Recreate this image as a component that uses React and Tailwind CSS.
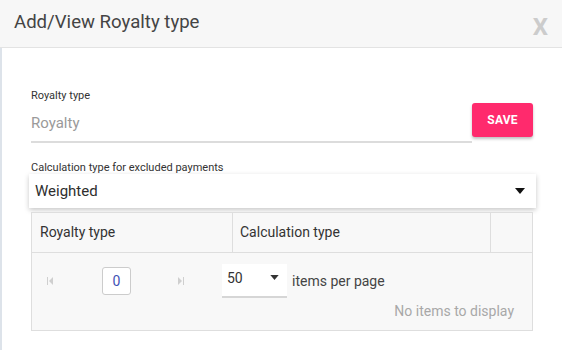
import React from 'react';

const CaretDown = ({ className }) => (
  <svg viewBox="0 0 10 6" className={className}>
    <path d="M0 0h10L5 6z" fill="currentColor" />
  </svg>
);

const FirstIcon = () => (
  <svg viewBox="0 0 6 8" className="w-[6px] h-[8px] text-[#cfcfcf]">
    <rect x="0" y="0" width="1" height="8" fill="currentColor" />
    <path d="M6 0v8L2 4z" fill="currentColor" />
  </svg>
);

const LastIcon = () => (
  <svg viewBox="0 0 6 8" className="w-[6px] h-[8px] text-[#cfcfcf]">
    <path d="M0 0v8l4-4z" fill="currentColor" />
    <rect x="5" y="0" width="1" height="8" fill="currentColor" />
  </svg>
);

const App = () => {
  return (
    <div className="w-[562px] h-[350px] bg-white overflow-hidden font-['Roboto',sans-serif]">
      {/* Header */}
      <div className="h-[48px] bg-[#f7f7f7] border-b border-[#e3e3e3] flex items-center justify-between pl-[14px] pr-[14px]">
        <h2 className="text-[18.6px] text-[#444] leading-none -mt-[2px]">Add/View Royalty type</h2>
        <span className="text-[24px] font-bold text-[#cccccc] leading-none mt-[6px]">X</span>
      </div>

      {/* Body */}
      <div className="h-[302px] border-l-2 border-[#dde3ea] pl-[29px] pr-[29px]">
        <div className="flex items-start pt-[41px]">
          <div className="flex-1">
            <label className="block text-[11px] text-[#333] leading-[13px]">Royalty type</label>
            <div className="mt-[9px] pb-[6px] border-b-2 border-[#dcdcdc]">
              <span className="text-[15px] text-[#9a9a9a] leading-[20px]">Royalty</span>
            </div>
          </div>
          <button className="mt-[14px] w-[61px] h-[34px] bg-[#ff2a6d] text-white text-[12px] font-bold rounded-[3px] shadow-[0_2px_3px_rgba(0,0,0,0.25)] tracking-[0.2px]">
            SAVE
          </button>
        </div>

        <div className="mt-[18px]">
          <label className="block text-[11px] text-[#333] leading-[13px]">Calculation type for excluded payments</label>
          <div className="-ml-[2px] -mr-[3px] h-[34px] bg-white shadow-[0_2px_5px_rgba(0,0,0,0.22)] flex items-center justify-between pl-[6px] pr-[11px]">
            <span className="text-[15px] text-[#2e2e2e]">Weighted</span>
            <CaretDown className="w-[10px] h-[6px] text-[#111]" />
          </div>
        </div>

        {/* Grid */}
        <div className="mt-[4px] border border-[#dedede] bg-[#f8f8f8]">
          <div className="flex h-[40px] border-b border-[#dedede] text-[14px] text-[#333]">
            <div className="w-[201px] flex items-center pl-[8px] border-r border-[#dedede]">Royalty type</div>
            <div className="w-[258px] flex items-center pl-[7px] border-r border-[#dedede]">Calculation type</div>
            <div className="flex-1"></div>
          </div>
          <div className="h-[77px]">
            <div className="flex items-center pt-[11px]">
              <div className="ml-[15px]">
                <FirstIcon />
              </div>
              <div className="ml-[49px] w-[29px] h-[28px] bg-white border border-[#cccccc] rounded-[3px] flex items-center justify-center text-[14px] text-[#3f51b5]">
                0
              </div>
              <div className="ml-[47px]">
                <LastIcon />
              </div>
              <div className="ml-[38px] w-[65px] h-[34px] bg-white border-b-2 border-[#d6d6d6] flex items-start justify-between pl-[5px] pr-[8px] pt-[5px]">
                <span className="text-[14px] text-[#333] leading-[18px]">50</span>
                <CaretDown className="w-[9px] h-[5px] mt-[6px] text-[#333]" />
              </div>
              <span className="ml-[5px] text-[14px] text-[#444]">items per page</span>
            </div>
            <div className="text-right pr-[18px] mt-[3px] text-[14px] text-[#a8a8a8]">No items to display</div>
          </div>
        </div>
      </div>
    </div>
  );
};

export default App;
